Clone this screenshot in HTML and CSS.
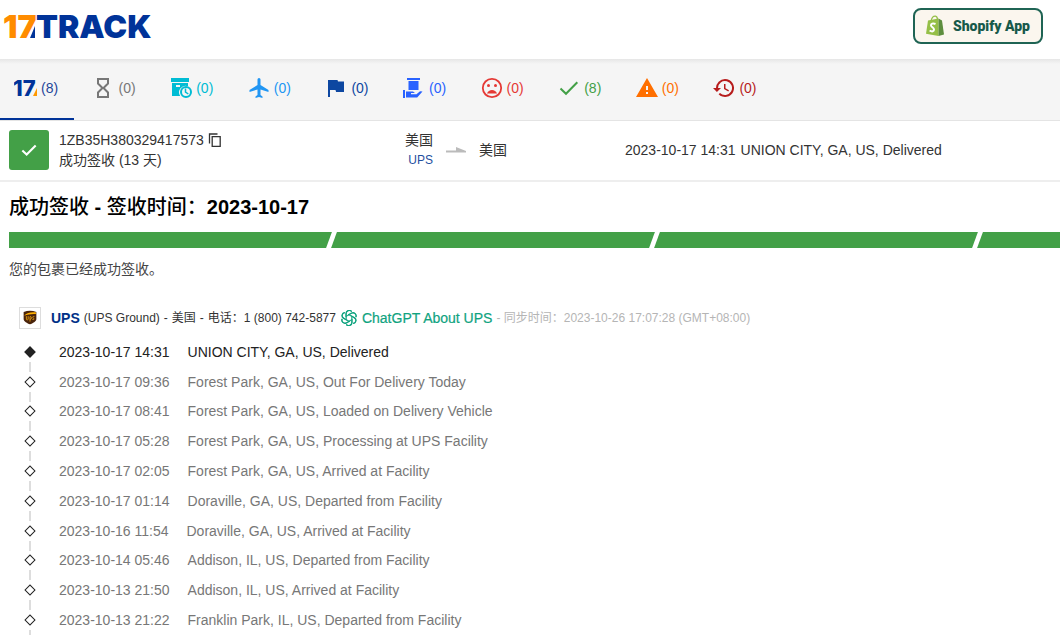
FILE: index.html
```html
<!DOCTYPE html>
<html lang="zh-CN">
<head>
<meta charset="utf-8">
<title>17TRACK</title>
<link rel="stylesheet" href="styles.css">
</head>
<body>
<header class="topbar">
  <a class="logo" href="#" aria-label="17TRACK">
    <svg width="170" height="44" viewBox="0 0 170 44">
      <text class="logo-num" x="1" y="30">17</text>
      <text class="logo-word" x="34" y="30">TRACK</text>
      <path class="logo-wedge" d="M33 18V30H28z"/>
    </svg>
  </a>
  <a class="shopify" href="#">
    <svg width="20" height="22" viewBox="0 0 20 22">
      <path fill="#95bf47" d="M3 5.500 13.500 3.500V21L1 18.700z"/>
      <path fill="#5e8e3e" d="M13.500 3.500 17 5.500 19 19.500 13.500 21z"/>
      <path fill="none" stroke="#95bf47" stroke-width="1.200" d="M6 6C7 2 9 1 10.500 1.200S12.500 3 12.500 5"/>
      <path fill="none" stroke="#fff" stroke-width="2" d="M10.500 9C8 7.800 5.800 8.800 6 10.500S9 12.500 9 14.500 7 17 4.600 15.500"/>
    </svg>
    Shopify App
  </a>
</header>

<nav class="tabs">
  <button class="tab tab-all active"><svg width="24" height="24" viewBox="0 0 24 24"><text class="mini-logo" x="-1" y="20">17</text><path fill="#f90" d="M23 12v8h-4z"/></svg>(8)</button>
  <button class="tab c-gray"><svg width="24" height="24" viewBox="0 0 24 24"><path fill="none" stroke="currentColor" stroke-width="2" d="M6 3h10v4.500L11.500 12 16 16.500V21H6v-4.500L10.500 12 6 7.500z"/></svg>(0)</button>
  <button class="tab c-cyan"><svg width="24" height="24" viewBox="0 0 24 24"><path fill="currentColor" d="M2 2h18v4H2zM3 7h16v3.300a6.500 6.500 0 0 0-7.800 9.700H3zm4 2v2h4V9z"/><circle cx="17" cy="16" r="5" fill="none" stroke="currentColor" stroke-width="2"/><path fill="none" stroke="currentColor" stroke-width="1.500" d="M16.500 12.500V16l2.800 2"/></svg>(0)</button>
  <button class="tab c-sky"><svg width="24" height="24" viewBox="0 0 24 24"><path fill="currentColor" d="M21.500 16v-2l-8-5V3.500a1.500 1.500 0 0 0-3 0V9l-8 5v2l8-2.500V19l-2 1.500V22l3.500-1 3.500 1v-1.500l-2-1.500v-5.500z"/></svg>(0)</button>
  <button class="tab c-navy"><svg width="24" height="24" viewBox="0 0 24 24"><path fill="currentColor" d="M14 5.500 13.500 4H4v17h2v-7h5.500l.6 2H20V5.500z"/></svg>(0)</button>
  <button class="tab c-blue"><svg width="24" height="24" viewBox="0 0 24 24"><path fill="currentColor" d="M5 2h13v2H5zM6.500 5h10v9h-10zM1 14h2v8H1zM4 15.500h7l2 1.500H9v1.200h5.500l3.500-3 2.500.3-5.300 6H4z"/></svg>(0)</button>
  <button class="tab c-red"><svg width="24" height="24" viewBox="0 0 24 24"><circle cx="12" cy="12" r="9.200" fill="none" stroke="currentColor" stroke-width="1.800"/><path fill="currentColor" d="M7 17.500c.8-2.300 2.700-3.500 5-3.500s4.200 1.200 5 3.500z"/><circle cx="8.500" cy="9.500" r="1.500" fill="currentColor"/><circle cx="15.500" cy="9.500" r="1.500" fill="currentColor"/></svg>(0)</button>
  <button class="tab c-green"><svg width="24" height="24" viewBox="0 0 24 24"><path fill="none" stroke="currentColor" stroke-width="2" d="m3.500 12.500 5.500 5.300L20.300 6.200"/></svg>(8)</button>
  <button class="tab c-orange"><svg width="24" height="24" viewBox="0 0 24 24"><path fill="currentColor" d="M1 21h22L12 2zm12-3h-2v-2h2zm0-4h-2v-4h2z"/></svg>(0)</button>
  <button class="tab c-dark"><svg width="24" height="24" viewBox="0 0 24 24"><path fill="currentColor" d="M13 3a9 9 0 0 0-9 9H1l3.900 3.900L9 12H6a7 7 0 1 1 2 4.900l-1.400 1.400A9 9 0 1 0 13 3zm-1 5v5l4.300 2.500.7-1.200-3.500-2V8z"/></svg>(0)</button>
</nav>

<section class="summary">
  <div class="parcel">
    <span class="state"><svg width="20" height="20" viewBox="0 0 24 24"><path fill="none" stroke="#fff" stroke-width="2.500" d="m4 12.500 5.200 5L20 6.500"/></svg></span>
    <div>
      <div class="number">1ZB35H380329417573
        <button class="copy" aria-label="复制"><svg width="14" height="14" viewBox="0 0 14 14"><path fill="none" stroke="currentColor" stroke-width="1.300" d="M1.500 10.500v-9.500h8M4.200 3.700h8v9.600h-8z"/></svg></button>
      </div>
      <div>成功签收 (13 天)</div>
    </div>
  </div>
  <div class="route">
    <div class="origin">美国<a href="#">UPS</a></div>
    <svg width="20" height="6" viewBox="0 0 20 6"><path fill="#bbb" d="M0 3.500h10V0l10 4v1.500H0z"/></svg>
    <div>美国</div>
  </div>
  <div class="latest"><time>2023-10-17 14:31</time><span>UNION CITY, GA, US, Delivered</span></div>
</section>

<main>
  <h1><span>成功签收</span> - <span>签收时间：</span>2023-10-17</h1>
  <div class="progress"><i></i><i></i><i></i></div>
  <p class="note">您的包裹已经成功签收。</p>

  <div class="carrier">
    <svg class="ups" width="22" height="22" viewBox="0 0 22 22"><path fill="#4a240b" d="M4 4.500c4.500-2 9.500-2 14 0V12c0 3-4 4.500-7 6-3-1.500-7-3-7-6z"/><path fill="#ffb000" d="M4.500 8.500C8 5 12 4.300 17.500 4.800v1.800C12 6.200 9 7.200 4.500 8.500z"/><path fill="none" stroke="#e09a10" d="M7 9v3.200c0 1.200 2 1.200 2 0V9m2 6V9.500c2-.8 2.500 3 0 3M15.800 9.300c-3-.3-1.700 1.800-.5 2.200.5 1.200-.8 1.500-1.700 1"/></svg>
    <a class="name" href="#">UPS</a>
    <span>(UPS Ground)</span><span>-</span><span>美国</span><span>-</span><span>电话：1 (800) 742-5877</span>
    <a class="gpt" href="#">
      <svg width="16" height="16" viewBox="-12 -12 24 24"><g fill="none" stroke="currentColor" stroke-width="1.600"><path id="p" d="M-1.500-4.500 3.800-7.500a4.600 4.600 0 0 1 6.200 6.300M-4.200 2.400V-6.500a4.800 4.800 0 0 1 8.200-3.400"/><use href="#p" transform="rotate(60)"/><use href="#p" transform="rotate(120)"/><use href="#p" transform="rotate(180)"/><use href="#p" transform="rotate(240)"/><use href="#p" transform="rotate(300)"/></g></svg>
      ChatGPT About UPS</a>
    <span class="sync">- 同步时间：2023-10-26 17:07:28 (GMT+08:00)</span>
  </div>

  <ol class="events">
    <li class="current"><time>2023-10-17 14:31</time><span>UNION CITY, GA, US, Delivered</span></li>
    <li><time>2023-10-17 09:36</time><span>Forest Park, GA, US, Out For Delivery Today</span></li>
    <li><time>2023-10-17 08:41</time><span>Forest Park, GA, US, Loaded on Delivery Vehicle</span></li>
    <li><time>2023-10-17 05:28</time><span>Forest Park, GA, US, Processing at UPS Facility</span></li>
    <li><time>2023-10-17 02:05</time><span>Forest Park, GA, US, Arrived at Facility</span></li>
    <li><time>2023-10-17 01:14</time><span>Doraville, GA, US, Departed from Facility</span></li>
    <li><time>2023-10-16 11:54</time><span>Doraville, GA, US, Arrived at Facility</span></li>
    <li><time>2023-10-14 05:46</time><span>Addison, IL, US, Departed from Facility</span></li>
    <li><time>2023-10-13 21:50</time><span>Addison, IL, US, Arrived at Facility</span></li>
    <li><time>2023-10-13 21:22</time><span>Franklin Park, IL, US, Departed from Facility</span></li>
  </ol>
</main>
</body>
</html>
```
FILE: styles.css
```css
*, *::before, *::after { box-sizing: border-box; }
body {
  margin: 0;
  overflow-x: hidden;
  background: #fff;
  color: #333;
  font: 14px/20px "Liberation Sans", "Noto Sans CJK SC", sans-serif;
}
a { color: inherit; text-decoration: none; }
button { border: 0; padding: 0; background: none; font: inherit; color: inherit; }
svg { flex: none; display: block; }

.topbar {
  display: flex;
  justify-content: space-between;
  align-items: flex-start;
  height: 59px;
  padding: 8px 17px 0 2px;
}
.logo-num, .logo-word { font: 900 32px Inter, sans-serif; }
.logo-num { fill: #ff8c00; }
.logo-word, .logo-wedge { fill: #039; }
.shopify {
  display: flex;
  align-items: center;
  gap: 8px;
  height: 36px;
  padding: 0 11px 0 10px;
  border: 2px solid #1f6454;
  border-radius: 8px;
  background: #fbf6ee;
  color: #17594a;
  font: 900 14px Roboto, sans-serif;
}

.tabs {
  display: grid;
  grid-template-columns: repeat(10, 1fr);
  column-gap: 4px;
  padding-right: calc(100% - 772px);
  background: linear-gradient(#e6e6e6, #f5f5f5 5px);
  border-bottom: 1px solid #e4e4e4;
}
.tab {
  display: flex;
  align-items: center;
  gap: 3px;
  height: 61px;
  padding: 0 0 1px 14px;
  border-bottom: 2px solid transparent;
}
.tab.active { border-color: #039; }
.mini-logo { font: 800 22px Inter, sans-serif; fill: #039; }
.tab-all { color: #1f4599; }
.c-gray { color: #777; }
.c-cyan { color: #00bcd4; }
.c-sky { color: #2196f3; }
.c-navy { color: #0d47a1; }
.c-blue { color: #2962ff; }
.c-red { color: #e53935; }
.c-green { color: #43a047; }
.c-orange { color: #ff6f00; }
.c-dark { color: #b71c1c; }

.summary {
  display: grid;
  grid-template-columns: 396fr 220fr 426fr;
  align-items: center;
  height: 61px;
  padding: 0 9px 1px;
  border-bottom: 2px solid #eee;
}
.parcel { display: flex; gap: 10px; }
.state {
  display: grid;
  place-items: center;
  width: 40px;
  height: 40px;
  border-radius: 3px;
  background: #43a047;
}
.number, .copy { display: flex; align-items: center; }
.number { gap: 4px; }
.route { display: flex; align-items: center; gap: 13px; }
.origin { text-align: right; }
.origin a { display: block; color: #1f4f9f; font-size: 12px; }
.latest { display: flex; gap: 5px; }

main { padding-left: 9px; }
h1 {
  margin: 0;
  padding: 10px 0;
  color: #000;
  font-size: 20px;
  line-height: 30px;
}
h1 span { font-weight: 500; }
.progress {
  display: flex;
  height: 16px;
  overflow: hidden;
  background: #43a047;
}
.progress i {
  flex: 0 0 323px;
  border-right: 5px solid #fff;
  transform: skewX(-20deg);
}
.progress i:first-child { flex-basis: 325px; }
.note { margin: 11px 0 28px; color: #444; }

.carrier {
  display: flex;
  align-items: center;
  gap: 4px;
  padding-left: 10px;
  font-size: 12px;
}
.ups { border: 1px solid #ddd; margin-right: 6px; }
.name { color: #003087; font-size: 14px; font-weight: 700; }
.gpt {
  display: flex;
  align-items: center;
  gap: 5px;
  padding-left: 1px;
  color: #10a37f;
  font-size: 14px;
  -webkit-text-stroke: 0.2px;
}
.sync { color: #b5b5b5; }

.events {
  display: grid;
  grid-auto-rows: 1fr;
  min-height: 298px;
  margin: 8px 0 0;
  padding: 0 0 0 16px;
  list-style: none;
  color: #777;
}
.events li {
  position: relative;
  display: flex;
  align-items: center;
  line-height: 28px;
}
.events li::before {
  content: "";
  width: 8px;
  height: 8px;
  margin: 0 25px 0 1px;
  border: 1px solid #222;
  transform: rotate(45deg);
}
.events li::after {
  content: "";
  position: absolute;
  top: calc(100% - 5px);
  left: 4px;
  width: 2px;
  height: 10px;
  background: #ddd;
}
.events time { margin-right: 18px; }
.events .current { color: #222; }
.events .current::before { background: #222; }
```
